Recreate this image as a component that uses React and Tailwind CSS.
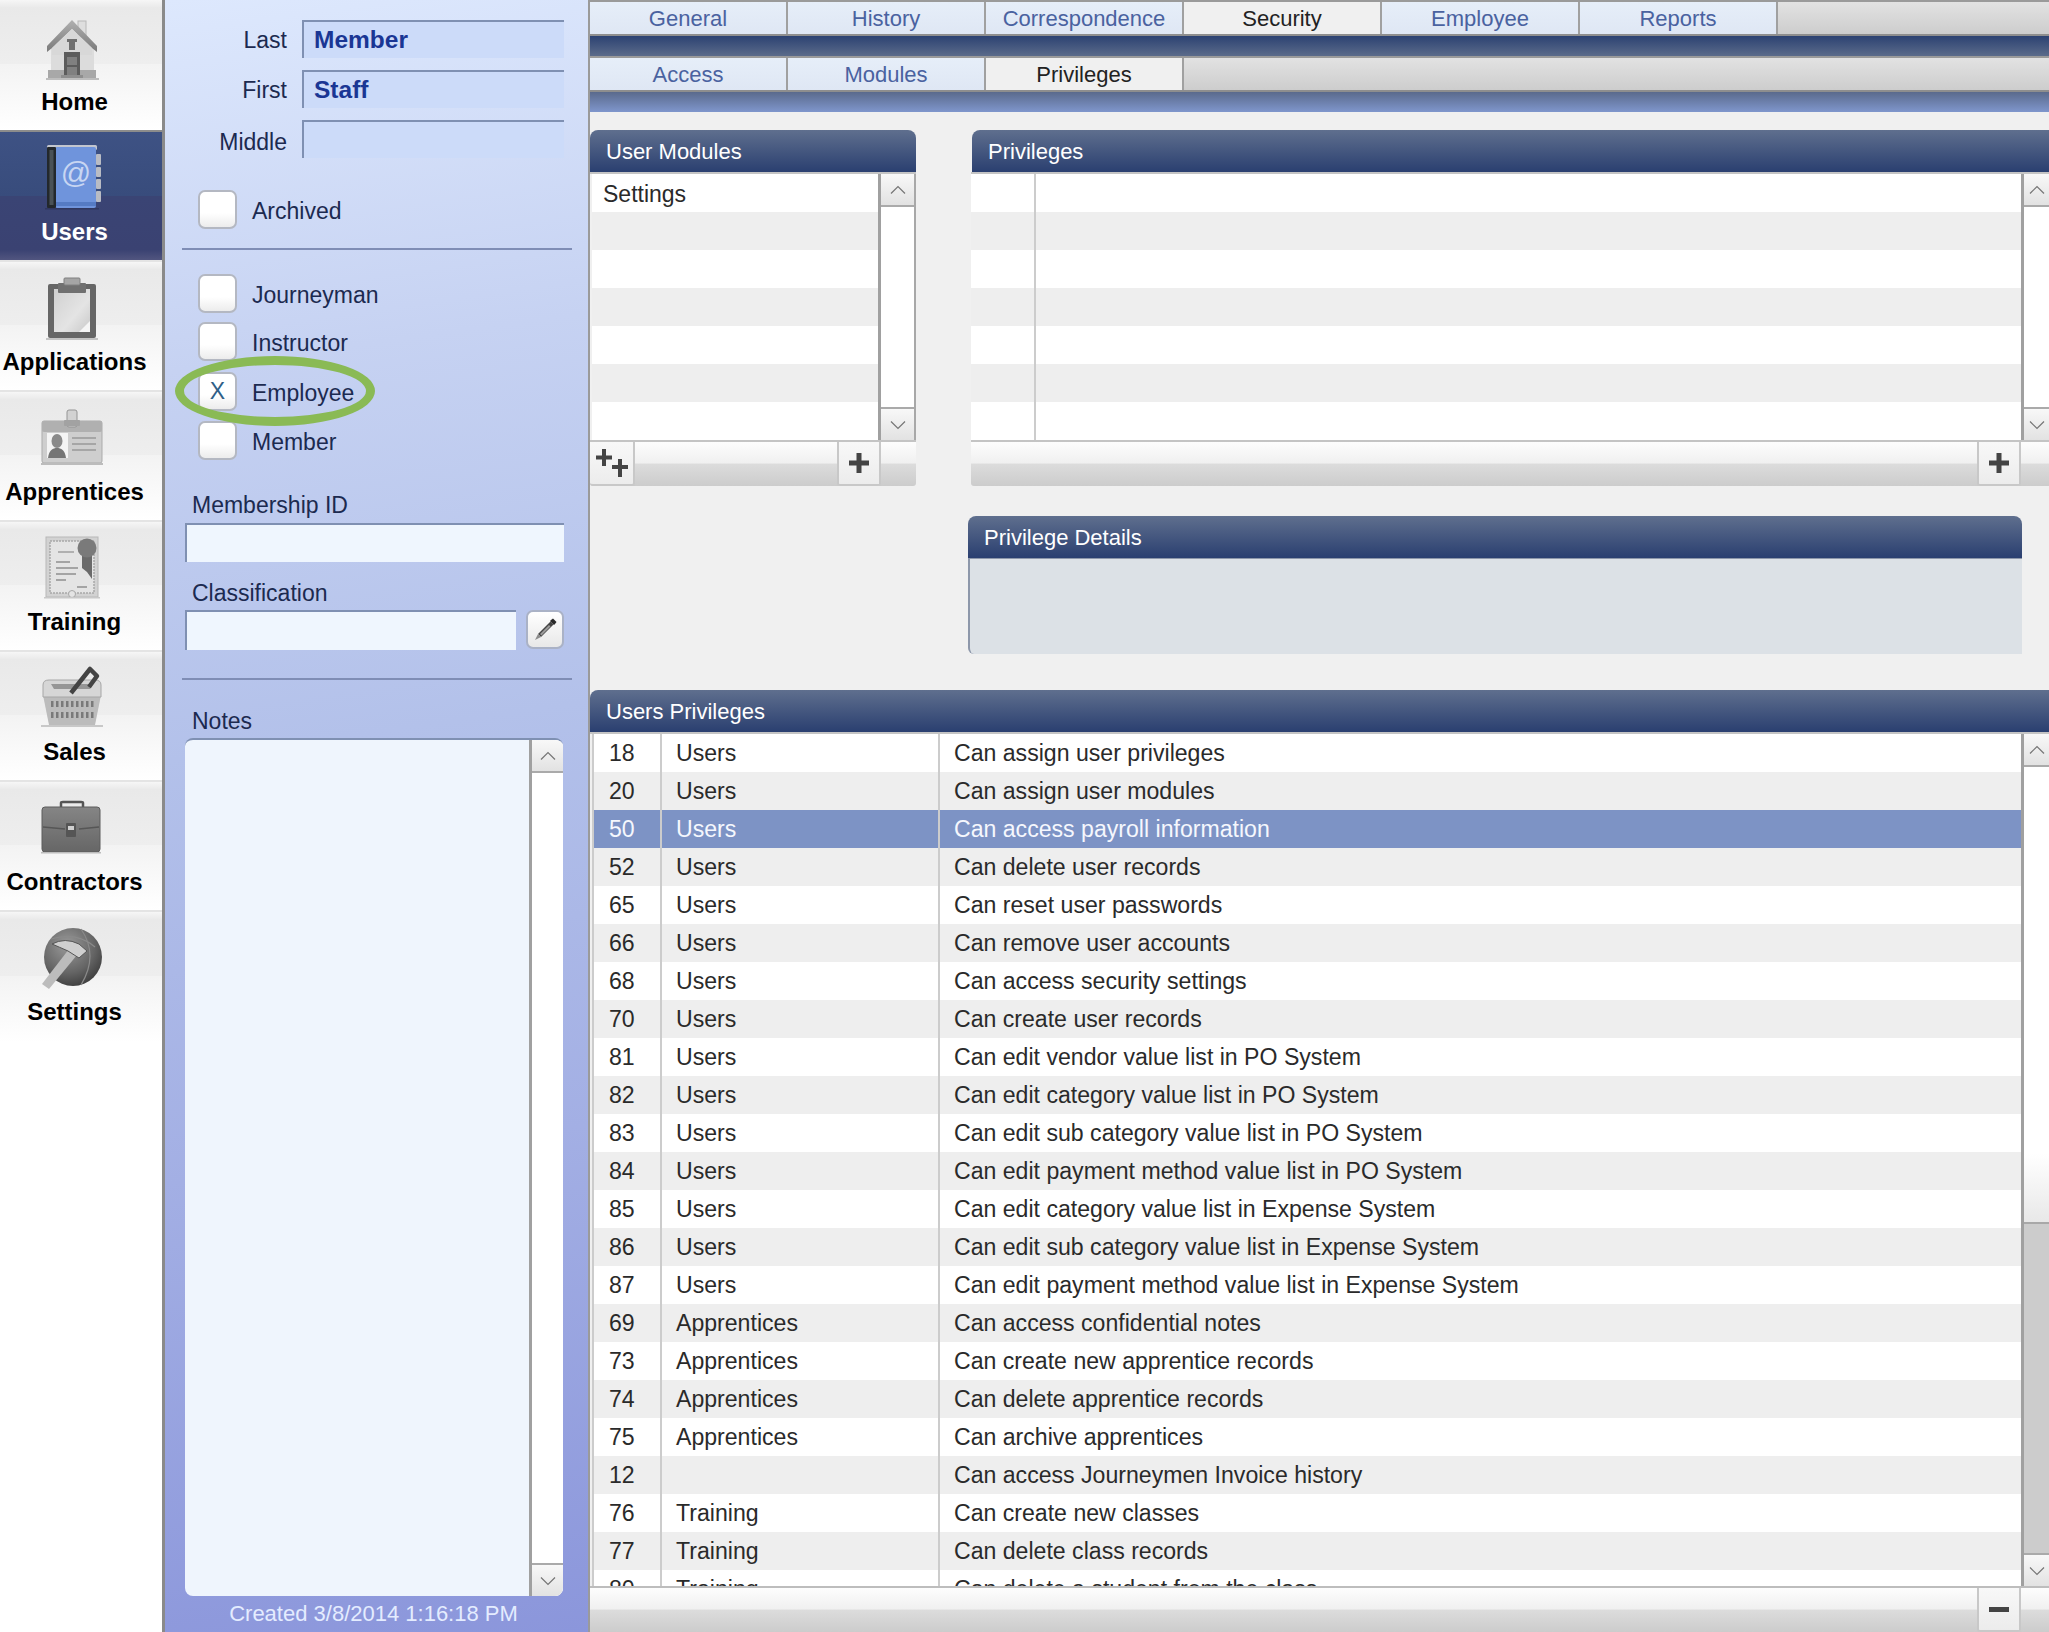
import React from 'react';

const sans = 'font-["Liberation_Sans",Arial,sans-serif]';

const privileges = [
    ['18', 'Users', 'Can assign user privileges'],
    ['20', 'Users', 'Can assign user modules'],
    ['50', 'Users', 'Can access payroll information'],
    ['52', 'Users', 'Can delete user records'],
    ['65', 'Users', 'Can reset user passwords'],
    ['66', 'Users', 'Can remove user accounts'],
    ['68', 'Users', 'Can access security settings'],
    ['70', 'Users', 'Can create user records'],
    ['81', 'Users', 'Can edit vendor value list in PO System'],
    ['82', 'Users', 'Can edit category value list in PO System'],
    ['83', 'Users', 'Can edit sub category value list in PO System'],
    ['84', 'Users', 'Can edit payment method value list in PO System'],
    ['85', 'Users', 'Can edit category value list in Expense System'],
    ['86', 'Users', 'Can edit sub category value list in Expense System'],
    ['87', 'Users', 'Can edit payment method value list in Expense System'],
    ['69', 'Apprentices', 'Can access confidential notes'],
    ['73', 'Apprentices', 'Can create new apprentice records'],
    ['74', 'Apprentices', 'Can delete apprentice records'],
    ['75', 'Apprentices', 'Can archive apprentices'],
    ['12', '', 'Can access Journeymen Invoice history'],
    ['76', 'Training', 'Can create new classes'],
    ['77', 'Training', 'Can delete class records'],
    ['80', 'Training', 'Can delete a student from the class'],
];

// Grey toolbar style icons, all drawn on a 70x70 box
function HomeIcon() {
    return (
        <svg width="70" height="70" viewBox="0 0 70 70">
            <defs>
                <linearGradient id="roof" x1="0" y1="0" x2="0" y2="1">
                    <stop offset="0" stopColor="#b0b0b0" />
                    <stop offset="1" stopColor="#7a7a7a" />
                </linearGradient>
            </defs>
            <rect x="9" y="63" width="53" height="2" fill="#bdbdbd" />
            <rect x="41" y="6" width="8" height="16" fill="#dedede" stroke="#b8b8b8" />
            <rect x="14" y="30" width="43" height="28" fill="#dcdcdc" />
            <path d="M35 5 L60 31 L60 37 L55 33 L35 14 L15 33 L10 37 L10 31 Z" fill="url(#roof)" />
            <path d="M35 14 L55 33 L55 40 L15 40 L15 33 Z" fill="#d8d8d8" />
            <path d="M30 24 h10 v3 h-2 v8 h-6 v-8 h-2 Z" fill="#707070" />
            <rect x="27" y="37" width="16" height="25" fill="#5c5c5c" />
            <rect x="30" y="42" width="10" height="8" fill="#808080" />
            <rect x="30" y="52" width="10" height="8" fill="#808080" />
            <rect x="11" y="55" width="16" height="8" fill="#a8a8a8" />
            <rect x="43" y="55" width="16" height="8" fill="#a8a8a8" />
            <rect x="24" y="60" width="22" height="3" fill="#8e8e8e" />
        </svg>
    );
}

function BookIcon() {
    return (
        <svg width="70" height="70" viewBox="0 0 70 70">
            <rect x="59" y="9" width="5" height="11" rx="1" fill="#b9bcc4" />
            <rect x="59" y="22" width="5" height="10" rx="1" fill="#b9bcc4" />
            <rect x="59" y="34" width="5" height="10" rx="1" fill="#b9bcc4" />
            <rect x="59" y="46" width="5" height="11" rx="1" fill="#b9bcc4" />
            <rect x="10" y="0" width="50" height="5" rx="1.5" fill="#c2c6cf" />
            <rect x="18" y="2" width="41" height="61" rx="2" fill="#6f94dc" />
            <rect x="18" y="57" width="41" height="4" fill="#557bc4" />
            <rect x="10" y="2" width="9" height="61" rx="1" fill="#23282c" />
            <rect x="12.5" y="5" width="4" height="55" fill="#4a5257" />
            <text x="39" y="38" textAnchor="middle" fontSize="30" fontFamily="Liberation Sans, sans-serif" fill="#c8d6f2">@</text>
            <rect x="8" y="63" width="54" height="1.5" fill="#2a2f50" opacity="0.6" />
        </svg>
    );
}

function ClipboardIcon() {
    return (
        <svg width="70" height="70" viewBox="0 0 70 70">
            <defs>
                <linearGradient id="paper" x1="0" y1="0" x2="1" y2="1">
                    <stop offset="0" stopColor="#d0d0d0" />
                    <stop offset="0.6" stopColor="#e4e4e4" />
                    <stop offset="1" stopColor="#c8c8c8" />
                </linearGradient>
            </defs>
            <rect x="11" y="9" width="48" height="54" rx="2" fill="#666666" />
            <rect x="17" y="14" width="36" height="43" fill="url(#paper)" />
            <path d="M53 46 L53 57 L42 57 Z" fill="#f5f5f5" />
            <rect x="21" y="8" width="28" height="10" rx="1" fill="#707070" />
            <rect x="27" y="3" width="16" height="7" rx="1" fill="#a5a5a5" stroke="#808080" />
            <rect x="9" y="63" width="52" height="2" fill="#c4c4c4" />
        </svg>
    );
}

function BadgeIcon() {
    return (
        <svg width="70" height="70" viewBox="0 0 70 70">
            <rect x="5" y="16" width="60" height="42" rx="2" fill="#cecece" stroke="#ababab" />
            <rect x="5" y="16" width="60" height="11" rx="2" fill="#b0b0b0" />
            <rect x="30" y="5" width="10" height="17" rx="2" fill="#d2d2d2" stroke="#949494" />
            <rect x="27" y="15" width="16" height="6" rx="1" fill="#a2a2a2" />
            <rect x="10" y="28" width="21" height="25" fill="#f4f4f4" />
            <ellipse cx="20" cy="36" rx="5.5" ry="7" fill="#8a8a8a" />
            <path d="M11 53 C12 45 16 43 20 43 C24 43 28 45 29 53 Z" fill="#757575" />
            <rect x="35" y="32" width="24" height="2" fill="#a6a6a6" />
            <rect x="35" y="38" width="24" height="2" fill="#a6a6a6" />
            <rect x="35" y="44" width="24" height="2" fill="#a6a6a6" />
            <rect x="4" y="58" width="62" height="2" fill="#bcbcbc" />
        </svg>
    );
}

function CertificateIcon() {
    return (
        <svg width="70" height="70" viewBox="0 0 70 70">
            <rect x="9" y="2" width="52" height="60" fill="#d2d2d2" stroke="#b8b8b8" />
            <rect x="13" y="6" width="44" height="52" fill="#e4e4e4" stroke="#a8a8a8" strokeWidth="1.5" strokeDasharray="2 1" />
            <circle cx="35" cy="59" r="3.5" fill="#e4e4e4" stroke="#a8a8a8" />
            <rect x="21" y="16" width="16" height="2" fill="#b0b0b0" />
            <rect x="19" y="26" width="14" height="2" fill="#a4a4a4" />
            <rect x="19" y="32" width="22" height="2" fill="#a4a4a4" />
            <rect x="19" y="38" width="20" height="2" fill="#a4a4a4" />
            <rect x="19" y="44" width="10" height="2" fill="#a4a4a4" />
            <rect x="40" y="51" width="10" height="2" fill="#a4a4a4" />
            <path d="M45 18 L55 18 L55 44 L50 37 L45 33 Z" fill="#6a6a6a" />
            <circle cx="50" cy="13" r="9.5" fill="#7a7a7a" />
            <rect x="7" y="62" width="56" height="1.5" fill="#c8c8c8" />
        </svg>
    );
}

function BasketIcon() {
    return (
        <svg width="70" height="70" viewBox="0 0 70 70">
            <path d="M6 30 L64 30 L58 60 L12 60 Z" fill="#bcbcbc" />
            <g fill="#7a7a7a">
                {[0, 1, 2, 3, 4, 5, 6, 7, 8].map((i) => (
                    <React.Fragment key={i}>
                        <rect x={14 + i * 5} y="36" width="2.5" height="6" />
                        <rect x={14 + i * 5} y="47" width="2.5" height="6" />
                    </React.Fragment>
                ))}
            </g>
            <path d="M6 20 Q6 15 12 15 L58 15 Q64 15 64 20 L64 32 L6 32 Z" fill="#d6d6d6" stroke="#a6a6a6" />
            <path d="M14 19 L56 19 L53 24 L17 24 Z" fill="#969696" />
            <path d="M34 28 L53 4 L60 11 L52 22" fill="none" stroke="#444444" strokeWidth="4.5" strokeLinejoin="round" />
            <rect x="4" y="60" width="62" height="2" fill="#c8c8c8" />
        </svg>
    );
}

function BriefcaseIcon() {
    return (
        <svg width="70" height="70" viewBox="0 0 70 70">
            <defs>
                <linearGradient id="brief" x1="0" y1="0" x2="0" y2="1">
                    <stop offset="0" stopColor="#858585" />
                    <stop offset="1" stopColor="#666666" />
                </linearGradient>
            </defs>
            <path d="M24 13 L24 8 Q24 7 26 7 L44 7 Q46 7 46 8 L46 13" fill="none" stroke="#555555" strokeWidth="2.5" />
            <rect x="5" y="12" width="58" height="45" rx="3" fill="url(#brief)" stroke="#5c5c5c" />
            <path d="M6 32 L28 34 M42 34 L62 32" stroke="#565656" strokeWidth="1.5" />
            <rect x="29" y="28" width="10" height="14" rx="1" fill="#555555" />
            <rect x="31" y="31" width="6" height="4" fill="#d0d0d0" />
            <rect x="4" y="57" width="60" height="1.5" fill="#bcbcbc" />
        </svg>
    );
}

function GlobeHammerIcon() {
    return (
        <svg width="70" height="70" viewBox="0 0 70 70">
            <defs>
                <radialGradient id="globe" cx="0.4" cy="0.3" r="0.8">
                    <stop offset="0" stopColor="#9a9a9a" />
                    <stop offset="0.6" stopColor="#646464" />
                    <stop offset="1" stopColor="#343434" />
                </radialGradient>
            </defs>
            <circle cx="36" cy="32" r="29" fill="url(#globe)" />
            <path d="M14 14 Q40 6 58 22 M44 4 Q62 30 44 60" fill="none" stroke="#8a8a8a" strokeWidth="1.2" />
            <path d="M5 59 L32 24 L40 30 L12 64 Z" fill="#bcbcbc" />
            <path d="M15 19 Q28 12 42 19 L50 26 L42 33 L31 26 Q22 22 15 19 Z" fill="#cfcfcf" stroke="#555" strokeWidth="1" />
        </svg>
    );
}

function NavItem({ label, active, first, last, icon }) {
    const background = active
        ? 'bg-[linear-gradient(180deg,#3e5284_0%,#384c7c_50%,#3a4474_50%,#3a4272_92%,#51557f_100%)]'
        : 'bg-[linear-gradient(180deg,#f6f6f6_0%,#e9e9e9_6%,#eeeeee_49.5%,#f3f3f3_49.5%,#ffffff_100%)]';
    const height = first ? 'h-[132px] pt-[15px]' : 'h-[130px] pt-[13px]';
    const sep = first ? 'border-b-2 border-[#8c8c8c]' : last ? '' : 'border-b-2 border-[#e4e4e4]';
    return (
        <div className={`flex flex-col items-center pr-[13px] ${height} ${background} ${sep}`}>
            <div className="mr-[5px] h-[70px] w-[70px]">{icon}</div>
            <span className={`mt-[3px] text-[24px] leading-[28px] font-bold whitespace-nowrap ${active ? 'text-white' : 'text-black'}`}>
                {label}
            </span>
        </div>
    );
}

function Chevron({ down }) {
    return (
        <svg width="16" height="10" viewBox="0 0 16 10">
            <path d={down ? 'M1 1.5 L8 8.5 L15 1.5' : 'M1 8.5 L8 1.5 L15 8.5'} fill="none" stroke="#757575" strokeWidth="1.2" />
        </svg>
    );
}

function ScrollButton({ down, border }) {
    return (
        <div className={`flex h-[33px] shrink-0 items-center justify-center bg-[linear-gradient(180deg,#f8f8f8,#e2e2e2)] ${border}`}>
            <Chevron down={down} />
        </div>
    );
}

// Vertical scrollbar column with an optional grey track at the bottom
function Scrollbar({ width, thumbEnd }) {
    return (
        <div className={`flex shrink-0 flex-col border-l-[3px] border-[#a0a0a0] bg-white ${width}`}>
            <ScrollButton border="border-b-2 border-[#aaaaaa]" />
            {thumbEnd ? (
                <div className="flex flex-1 flex-col">
                    <div className={`${thumbEnd} border-b-2 border-[#a8a8a8] bg-[linear-gradient(180deg,#ffffff_0%,#ffffff_85%,#e8e8e8_100%)]`} />
                    <div className="flex-1 bg-[#cccccc]" />
                </div>
            ) : (
                <div className="flex-1" />
            )}
            <ScrollButton down border="border-t-2 border-[#aaaaaa]" />
        </div>
    );
}

function PanelHeader({ title, className = '' }) {
    return (
        <div className={`flex h-[42px] items-center rounded-t-[8px] bg-[linear-gradient(180deg,#5f6f8e,#2a3f70)] pl-[16px] text-[22px] text-white ${className}`}>
            {title}
        </div>
    );
}

function FooterButton({ className, children }) {
    return (
        <div className={`flex h-[44px] items-center justify-center rounded-b-[3px] border-b-2 border-[#c8c8c8] bg-[linear-gradient(180deg,#f8f8f8,#ececec)] ${className}`}>
            {children}
        </div>
    );
}

function Plus({ size = 20, thick = 5 }) {
    const a = (size - thick) / 2;
    return (
        <svg width={size} height={size} viewBox={`0 0 ${size} ${size}`}>
            <rect x="0" y={a} width={size} height={thick} fill="#444444" />
            <rect x={a} y="0" width={thick} height={size} fill="#444444" />
        </svg>
    );
}

function PlusPlus() {
    return (
        <svg width="32" height="28" viewBox="0 0 32 28">
            <rect x="0" y="6.5" width="16" height="4" fill="#444444" />
            <rect x="6" y="0" width="4" height="17" fill="#444444" />
            <rect x="16" y="16" width="16" height="4" fill="#444444" />
            <rect x="22" y="10" width="4" height="18" fill="#444444" />
        </svg>
    );
}

const footerBg = 'bg-[linear-gradient(180deg,#fdfdfd_0%,#f0f0f0_48%,#dcdcdc_50%,#cccccc_100%)]';

function Tab({ label, active }) {
    return (
        <div
            className={`flex h-full w-[198px] items-center justify-center border-r-2 border-[#a0a0a0] text-[22px] ${
                active ? 'bg-[#f0f0f0] text-[#222222]' : 'bg-[linear-gradient(180deg,#e6eef9,#dfe7f4)] text-[#4a62a0]'
            }`}
        >
            {label}
        </div>
    );
}

function TabStrip({ tabs, active }) {
    return (
        <div className="flex h-[36px] border-t-2 border-b-2 border-t-[#9a9a9a] border-b-[#8e8e8e] bg-[linear-gradient(180deg,#e2e2e2,#cdcdcd)]">
            {tabs.map((tab) => (
                <Tab key={tab} label={tab} active={tab === active} />
            ))}
        </div>
    );
}

function Checkbox({ label, checked, className }) {
    return (
        <div className={`flex h-[39px] items-center pl-[33px] ${className}`}>
            <div className="flex h-[39px] w-[39px] items-center justify-center rounded-[7px] border-2 border-[#b4b8c2] bg-[linear-gradient(180deg,#ffffff_0%,#ffffff_60%,#ececec_100%)] text-[23px] text-[#2f5f88]">
                {checked ? 'X' : ''}
            </div>
            <span className="ml-[15px] pt-[3px] text-[23px] text-[#1c2a50]">{label}</span>
        </div>
    );
}

function NameField({ label, value, labelPad = 'pt-[3px]', className = '' }) {
    return (
        <div className={`flex h-[38px] items-center ${className}`}>
            <span className={`w-[122px] text-right text-[23px] text-[#1c2a50] ${labelPad}`}>{label}</span>
            <div className="ml-[15px] flex h-full w-[262px] items-center border-t-2 border-l-2 border-[#7f90b2] bg-[#ccdbf9] pl-[10px] text-[24.5px] font-bold text-[#1a3694]">
                {value}
            </div>
        </div>
    );
}

function Divider({ className }) {
    return <div className={`ml-[17px] h-[2px] w-[390px] bg-[#7f8db5] ${className}`} />;
}

function StripedRows({ first }) {
    return [0, 1, 2, 3, 4, 5, 6].map((i) => (
        <div key={i} className={`h-[38px] ${i % 2 ? 'bg-[#eeeeee]' : 'bg-white'}`}>
            {i === 0 && first}
        </div>
    ));
}

export default function App() {
    return (
        <div className={`flex h-screen w-full overflow-hidden bg-white ${sans}`}>
            {/* Main navigation */}
            <aside className="h-full w-[165px] shrink-0 border-r-[3px] border-[#8a8a8a] bg-white">
                <NavItem first label="Home" icon={<HomeIcon />} />
                <NavItem active label="Users" icon={<BookIcon />} />
                <NavItem label="Applications" icon={<ClipboardIcon />} />
                <NavItem label="Apprentices" icon={<BadgeIcon />} />
                <NavItem label="Training" icon={<CertificateIcon />} />
                <NavItem label="Sales" icon={<BasketIcon />} />
                <NavItem label="Contractors" icon={<BriefcaseIcon />} />
                <NavItem last label="Settings" icon={<GlobeHammerIcon />} />
            </aside>

            {/* Record panel */}
            <section className="relative h-full w-[425px] shrink-0 border-r-2 border-[#9a9a9a] bg-[linear-gradient(172deg,#dde8fd_0%,#c6d2f2_22%,#b3c1ea_45%,#a3afe4_70%,#8b96db_100%)] pt-[20px]">
                <NameField label="Last" value="Member" />
                <NameField label="First" value="Staff" className="mt-[12px]" />
                <NameField label="Middle" labelPad="pt-[7px]" className="mt-[12px]" />
                <Checkbox label="Archived" className="mt-[32px]" />
                <Divider className="mt-[19px]" />
                <Checkbox label="Journeyman" className="mt-[24px]" />
                <Checkbox label="Instructor" className="mt-[9px]" />
                <Checkbox label="Employee" checked className="mt-[11px]" />
                <Checkbox label="Member" className="mt-[10px]" />

                <div className="mt-[31px] h-[28px] pl-[27px] text-[23px] leading-[28px] text-[#1c2a50]">Membership ID</div>
                <div className="mt-[4px] ml-[20px] h-[39px] w-[379px] border-t-2 border-l-2 border-[#7f90b2] bg-[#eff6fe]" />

                <div className="mt-[17px] h-[28px] pl-[27px] text-[23px] leading-[28px] text-[#1c2a50]">Classification</div>
                <div className="mt-[3px] ml-[20px] flex h-[40px] w-[379px] justify-between">
                    <div className="h-full w-[331px] border-t-2 border-l-2 border-[#7f90b2] bg-[#eff6fe]" />
                    <div className="flex h-[39px] w-[38px] items-center justify-center rounded-[7px] border-2 border-[#aab2c6] bg-[linear-gradient(180deg,#ffffff,#e8e8e8)]">
                        <svg width="23" height="23" viewBox="0 0 23 23">
                            <path d="M16.5 3.5 L19.5 6.5 L7 19 L4 16 Z" fill="#444444" />
                            <path d="M17 2 L19 0.5 L22.5 4 L21 6 L20 7 L16 3 Z" fill="#2a2a2a" />
                            <path d="M4 16 L7 19 L1 22 Z" fill="#8c8c8c" />
                            <path d="M15 7 L16.5 8.5 L7.5 17.5 L6 16 Z" fill="#9a9a9a" />
                        </svg>
                    </div>
                </div>
                <Divider className="mt-[28px]" />

                <div className="mt-[27px] h-[27px] pl-[27px] text-[23px] leading-[28px] text-[#1c2a50]">Notes</div>
                <div className="mt-[4px] ml-[20px] flex h-[858px] w-[378px] overflow-hidden rounded-[8px] border-t-2 border-[#7f90b2] bg-[#eff5fd]">
                    <div className="flex-1" />
                    <Scrollbar width="w-[34px]" />
                </div>

                <div className="mt-[4px] h-[28px] pr-[6px] text-center text-[22px] leading-[28px] text-[#e4ecff]">Created 3/8/2014 1:16:18 PM</div>

                {/* Callout around the Employee checkbox */}
                <div className="absolute top-[356px] left-[10px] h-[70px] w-[200px] rounded-[50%] border-[9px] border-[#8aba55]" />
            </section>

            {/* Security tab */}
            <main className="flex h-full min-w-0 flex-1 flex-col bg-[#f0f0f0]">
                <TabStrip tabs={['General', 'History', 'Correspondence', 'Security', 'Employee', 'Reports']} active="Security" />
                <div className="h-[20px] bg-[linear-gradient(180deg,#2c4272,#5b6b8a)]" />
                <TabStrip tabs={['Access', 'Modules', 'Privileges']} active="Privileges" />
                <div className="h-[20px] bg-[linear-gradient(180deg,#5a6a8c,#7f96cc)]" />

                <div className="mt-[18px] flex items-start">
                    {/* User Modules */}
                    <div className="w-[326px]">
                        <PanelHeader title="User Modules" />
                        <div className="flex h-[270px] border-y-2 border-[#c4c4c4] pl-[2px]">
                            <div className="flex-1 overflow-hidden bg-white">
                                <StripedRows first={<div className="pt-[1px] pl-[11px] text-[23px] leading-[38px] text-[#2a2a2a]">Settings</div>} />
                            </div>
                            <Scrollbar width="w-[36px]" />
                            <div className="w-[2px] bg-[#a8a8a8]" />
                        </div>
                        <div className={`flex h-[44px] rounded-b-[3px] ${footerBg}`}>
                            <FooterButton className="w-[45px] border-r-2">
                                <PlusPlus />
                            </FooterButton>
                            <div className="w-[202px]" />
                            <FooterButton className="w-[44px] border-x-2">
                                <Plus />
                            </FooterButton>
                        </div>
                    </div>

                    <div className="ml-[55px] flex min-w-0 flex-1 flex-col">
                        {/* Privileges */}
                        <PanelHeader title="Privileges" className="ml-[1px] rounded-tr-none" />
                        <div className="flex h-[270px] border-y-2 border-[#c4c4c4]">
                            <div className="relative flex-1 overflow-hidden bg-white">
                                <StripedRows />
                                <div className="absolute top-0 bottom-0 left-[63px] w-[2px] bg-[#cccccc]" />
                            </div>
                            <Scrollbar width="w-[28px]" />
                        </div>
                        <div className={`flex h-[44px] justify-end rounded-bl-[3px] pr-[28px] ${footerBg}`}>
                            <FooterButton className="w-[44px] border-x-2">
                                <Plus />
                            </FooterButton>
                        </div>

                        {/* Privilege Details */}
                        <div className="mt-[30px] -ml-[3px] w-[1054px]">
                            <PanelHeader title="Privilege Details" />
                            <div className="h-[96px] rounded-bl-[6px] border-t border-l-2 border-[#8d97aa] bg-[#dce1e6]" />
                        </div>
                    </div>
                </div>

                {/* Users Privileges */}
                <div className="mt-[36px] flex min-h-0 flex-1 flex-col">
                    <PanelHeader title="Users Privileges" className="rounded-tr-none" />
                    <div className="flex h-[854px] shrink-0 border-t-2 border-[#c4c4c4] pl-[2px]">
                        <div className="min-w-0 flex-1 overflow-hidden border-l-2 border-[#cccccc] bg-white text-[23.1px] leading-[38px]">
                            {privileges.map(([id, module, text], i) => (
                                <div
                                    key={id}
                                    className={`flex h-[38px] ${
                                        id === '50' ? 'bg-[#7d93c5] text-[#f5f7fd]' : i % 2 ? 'bg-[#eeeeee] text-[#2a2a2a]' : 'bg-white text-[#2a2a2a]'
                                    }`}
                                >
                                    <div className="w-[68px] shrink-0 border-r-2 border-[#cccccc] pl-[15px]">{id}</div>
                                    <div className="w-[278px] shrink-0 border-r-2 border-[#cccccc] pl-[14px]">{module}</div>
                                    <div className="min-w-0 flex-1 pl-[14px] whitespace-nowrap">{text}</div>
                                </div>
                            ))}
                        </div>
                        <Scrollbar width="w-[28px]" thumbEnd="h-[457px]" />
                    </div>
                    <div className={`flex h-[46px] shrink-0 justify-end border-t-2 border-[#bdbdbd] pr-[28px] ${footerBg}`}>
                        <FooterButton className="w-[44px] border-x-2">
                            <div className="h-[5px] w-[20px] bg-[#444444]" />
                        </FooterButton>
                    </div>
                </div>
            </main>
        </div>
    );
}
